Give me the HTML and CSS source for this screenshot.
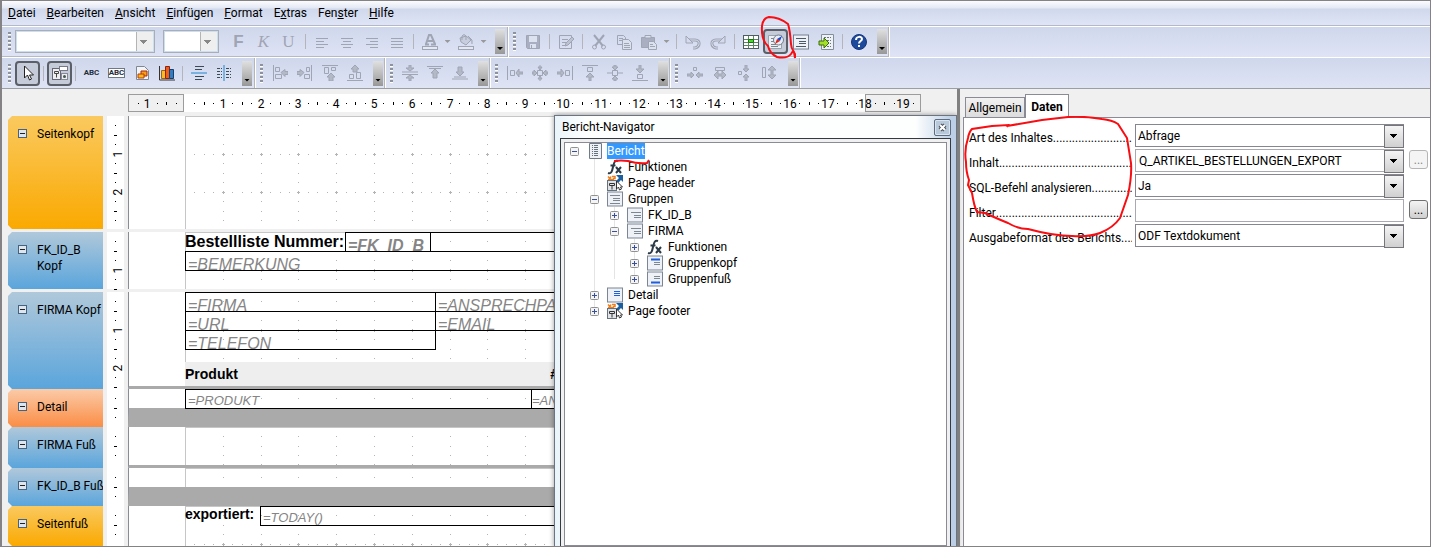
FILE: index.html
```html
<!DOCTYPE html>
<html lang="de">
<head>
    <meta charset="UTF-8">
    <meta name="viewport" content="width=device-width, initial-scale=1.0">
    <title>Bericht-Designer</title>
    <link rel="stylesheet" href="styles.css">
</head>
<body>
    <!-- Shared icons -->
    <svg class="symbols" aria-hidden="true">
        <symbol id="plus" viewBox="0 0 9 9"><rect x=".5" y=".5" width="8" height="8" rx="1" fill="#f4f4f4" stroke="#919191"/><path d="M2 4.500h5M4.500 2v5" stroke="#3a4f9c"/></symbol>
        <symbol id="minus" viewBox="0 0 9 9"><rect x=".5" y=".5" width="8" height="8" rx="1" fill="#f4f4f4" stroke="#919191"/><path d="M2 4.500h5" stroke="#3a4f9c"/></symbol>
        <symbol id="group" viewBox="0 0 16 16"><rect x=".5" y="1" width="15" height="14" fill="#eef1f6" stroke="#7a8596"/><path d="M4 5.500h10M7 8.500h7M7 10.500h7" stroke="#7c8791"/></symbol>
        <symbol id="page" viewBox="0 0 16 16"><path d="M1 1.500l2 2M4 1.500l-1 2M5 1.500h3v2H6M1 4.500h6" fill="none" stroke="#ef7d1c" stroke-width="1.500"/><path d="M9 0h7v7l-2-2-3 3-2-2 3-3z" fill="#1d5f9e"/><rect x=".5" y="5.500" width="9" height="10" fill="#dfe3e8" stroke="#66717e"/><path d="M2.500 8.500h5v2h-5zM5 10.500v4" fill="none" stroke="#333"/><path d="M9.500 6v8l2-2 1 3 2-1-1-2h2z" fill="#fff" stroke="#333"/></symbol>
        <symbol id="fx" viewBox="0 0 16 16"><path d="M1 14c3 1 4-1 5-6s2-7 5-6M3.500 6.500h5" fill="none" stroke="#2c3b47" stroke-width="2"/><path d="M9 8l5 6M14 8l-5 6" stroke="#2c3b47" stroke-width="2"/></symbol>
    </svg>

    <div class="app">
        <nav class="menubar">
            <button><u>D</u>atei</button>
            <button><u>B</u>earbeiten</button>
            <button><u>A</u>nsicht</button>
            <button><u>E</u>infügen</button>
            <button><u>F</u>ormat</button>
            <button>E<u>x</u>tras</button>
            <button>Fen<u>s</u>ter</button>
            <button><u>H</u>ilfe</button>
        </nav>

        <div class="toolbar-row format-row">
            <div class="toolbar">
                <span class="grip"></span>
                <select class="font-name" disabled aria-label="Schriftart"></select>
                <select class="font-size" disabled aria-label="Schriftgröße"></select>
                <button class="tool letter bold" disabled>F</button>
                <button class="tool letter italic" disabled>K</button>
                <button class="tool letter" disabled>U</button>
                <span class="sep"></span>
                <button class="tool" disabled aria-label="Linksbündig"><svg viewBox="0 0 16 16"><path d="M2 4.500h12M2 7.500h8M2 10.500h12M2 13.500h8"/></svg></button>
                <button class="tool" disabled aria-label="Zentriert"><svg viewBox="0 0 16 16"><path d="M2 4.500h12M4 7.500h8M2 10.500h12M4 13.500h8"/></svg></button>
                <button class="tool" disabled aria-label="Rechtsbündig"><svg viewBox="0 0 16 16"><path d="M2 4.500h12M6 7.500h8M2 10.500h12M6 13.500h8"/></svg></button>
                <button class="tool" disabled aria-label="Blocksatz"><svg viewBox="0 0 16 16"><path d="M2 4.500h12M2 7.500h12M2 10.500h12M2 13.500h12"/></svg></button>
                <span class="sep"></span>
                <button class="tool" disabled aria-label="Zeichenfarbe"><svg viewBox="0 0 16 16"><path d="M3 10.500h4M9 10.500h5M4 10l3-9h2l4 9M6 7h5" stroke-width="2"/><rect x=".5" y="12.500" width="15" height="3" fill="#e4e8f4"/></svg></button>
                <button class="arrow" disabled aria-label="Zeichenfarbe wählen"></button>
                <button class="tool" disabled aria-label="Hintergrundfarbe"><svg viewBox="0 0 16 16"><path d="M2 4l6-2 5 4-5 5-5-3zM4 6V2q2-3 4 0v4M10 2l4 4v4" fill="#c8cede"/><rect x=".5" y="12.500" width="15" height="3" fill="#e4e8f4"/></svg></button>
                <button class="arrow" disabled aria-label="Hintergrund wählen"></button>
                <button class="more" aria-label="Mehr"></button>
            </div>
            <div class="toolbar">
                <span class="grip"></span>
                <button class="tool" disabled aria-label="Speichern"><svg viewBox="0 0 16 16"><path d="M1.500 1.500h13v13h-12l-1-1z" fill="#a9afc0"/><path d="M4 2h8v6H4z" fill="#dde2f0" stroke="none"/><path d="M5 10h6v4H5z" fill="#dde2f0" stroke="none"/><path d="M6.500 11v3"/></svg></button>
                <span class="sep"></span>
                <button class="tool" disabled aria-label="Bearbeiten"><svg viewBox="0 0 16 16"><path d="M1.500 1.500h12v13h-12zM4 5.500h6M4 8.500h4M4 11.500h3" fill="none"/><path d="M7 12l1-3 6-6 2 2-6 6z" fill="#bcc2d2"/></svg></button>
                <span class="sep"></span>
                <button class="tool" disabled aria-label="Ausschneiden"><svg viewBox="0 0 16 16"><path d="M3 1l9 11M13 1L4 12" stroke-width="2"/><circle cx="3.500" cy="13" r="2"/><circle cx="12.500" cy="13" r="2"/></svg></button>
                <button class="tool" disabled aria-label="Kopieren"><svg viewBox="0 0 16 16"><path d="M1.500 1.500h6l2 2v7h-8zM3 4.500h4M3 6.500h4"/><path d="M6.500 5.500h6l3 3v7h-9zM8 9.500h5M8 11.500h6M8 13.500h6" fill="#dce1f0"/></svg></button>
                <button class="tool" disabled aria-label="Einfügen"><svg viewBox="0 0 16 16"><path d="M.500 3.500h13v10H.5z" fill="#a9afc0"/><path d="M4 4V1.500h6V4z" fill="#dce1f0"/><path d="M7.500 7.500h5l3 3v5h-8zM9 10.500h3M9 12.500h5" fill="#dce1f0"/></svg></button>
                <button class="arrow" disabled aria-label="Einfügen wählen"></button>
                <span class="sep"></span>
                <button class="tool" disabled aria-label="Rückgängig"><svg viewBox="0 0 16 16"><path d="M4 6h6c6 0 5 7 0 8H8" stroke-width="3"/><path d="M4 6h6c6 0 5 7 0 8H8" stroke="#d5dbec"/><path d="M1 2v7h7z" fill="#d5dbec"/></svg></button>
                <button class="tool" disabled aria-label="Wiederholen"><svg viewBox="0 0 16 16"><path d="M12 6H6c-6 0-5 7 0 8h2" stroke-width="3"/><path d="M12 6H6c-6 0-5 7 0 8h2" stroke="#d5dbec"/><path d="M15 2v7H8z" fill="#d5dbec"/></svg></button>
                <span class="sep"></span>
                <button class="tool" aria-label="Tabelle"><svg viewBox="0 0 16 16"><rect x=".5" y="1.500" width="15" height="13" fill="#fff" stroke="#4c5f5a"/><path d="M1 5.500h14M1 8.500h14M1 11.500h14M5.500 2v12M10.500 2v12" stroke="#5c8566"/><path d="M5.500 5.500h5v3h-5z" fill="#3fe01e" stroke="#206c17"/></svg></button>
                <button class="tool pressed" aria-label="Bericht-Navigator"><svg viewBox="0 0 16 16"><path d="M.500 1.500h13v13H.5z" fill="#edf0f5" stroke="#99a3ad"/><path d="M3 4.500h4M3 7.500h3M3 10.500h5M3 12.500h7" stroke="#7b858e"/><circle cx="10.500" cy="6" r="5" fill="#e4edf8" stroke="#737c88"/><path d="M14 2l-2 5-3-2z" fill="#1646c9" stroke="none"/><path d="M7 10l2-5 3 2z" fill="#e22614" stroke="none"/></svg></button>
                <button class="tool" aria-label="Sortieren und Gruppieren"><svg viewBox="0 0 16 16"><rect x=".5" y="1" width="15" height="14" fill="#eef1f6" stroke="#75808f"/><path d="M3 4.500h10M6 7.500h7M6 9.500h7M3 12.500h10" stroke="#4b5866"/></svg></button>
                <button class="tool" aria-label="Bericht ausführen"><svg viewBox="0 0 16 16"><path d="M3.500 .5h12v15h-12z" fill="#eef1f6" stroke="#848e99"/><path d="M6 3.500h7M9 6.500h4M9 9.500h4M6 12.500h7" stroke="#68737e" stroke-dasharray="2 1"/><path d="M1 7h5V4l5 5-5 5v-3H1z" fill="#a4e126" stroke="#3a6b0c"/></svg></button>
                <span class="sep"></span>
                <button class="tool" aria-label="Hilfe"><svg viewBox="0 0 16 16"><circle cx="8" cy="8" r="7.500" fill="#1f4a9c" stroke="#14357a"/><path d="M5 6c0-4 6-4 6-1 0 2-3 2-3 4.500M8 11v2" stroke="#fff" stroke-width="2"/></svg></button>
                <button class="more" aria-label="Mehr"></button>
            </div>
        </div>

        <div class="toolbar-row">
            <div class="toolbar">
                <span class="grip"></span>
                <button class="tool pressed" aria-label="Auswahl"><svg viewBox="0 0 16 16"><path d="M4.500 1v12l3-3 2 5 2-1-2-4h4z" fill="#fff" stroke="#222"/></svg></button>
                <span class="sep"></span>
                <button class="tool pressed" aria-label="Berichtssteuerelemente"><svg viewBox="0 0 16 16"><rect x=".5" y="3.500" width="8" height="11" fill="#eee" stroke="#667"/><path d="M2.500 6.500h4v2h-4zM4.500 8.500v4" stroke="#444"/><rect x="7.500" y="1.500" width="8" height="4" fill="#fff" stroke="#778"/><rect x="9.500" y="8.500" width="6" height="6" fill="#eee" stroke="#889"/><circle cx="12.500" cy="11.500" r="1.500" fill="#455" stroke="none"/></svg></button>
                <span class="sep"></span>
                <button class="tool abc">ABC</button>
                <button class="tool abc boxed"><span>ABC</span></button>
                <button class="tool" aria-label="Bild"><svg viewBox="0 0 16 16"><path d="M2.500 1.500h8l4 4v9h-12z" fill="#f3f4f7" stroke="#7e8894"/><path d="M7 6h6v5H7z" fill="#f7a017" stroke="#a8260c"/><path d="M4 9h6v4H4z" fill="#ffb91d" stroke="#b53a0c"/></svg></button>
                <button class="tool" aria-label="Diagramm"><svg viewBox="0 0 16 16"><path d="M.500 1v14H16" stroke="#333"/><path d="M2.500 5.500h4v8h-4z" fill="#f9bb23" stroke="#a06210"/><path d="M6.500 1.500h4v12h-4z" fill="#f25b18" stroke="#8e210b"/><path d="M10.500 4.500h4v9h-4z" fill="#347bc0" stroke="#153d6d"/></svg></button>
                <span class="sep"></span>
                <button class="tool" aria-label="Horizontale Linie"><svg viewBox="0 0 16 16"><path d="M4 1.500h9M4 4.500h7M4 11.500h9M4 14.500h7" stroke="#3a4a57"/><path d="M0 8h16" stroke="#1c86cf"/></svg></button>
                <button class="tool" aria-label="Vertikale Linie"><svg viewBox="0 0 16 16"><path d="M1 3.500h5M1 6.500h5M1 9.500h5M1 12.500h5M10 3.500h5M10 6.500h5M10 9.500h5M10 12.500h5" stroke="#3a4a57" stroke-dasharray="3 1"/><path d="M8 0v16" stroke="#1c86cf"/></svg></button>
                <button class="more" aria-label="Mehr"></button>
            </div>
            <div class="toolbar">
                <span class="grip"></span>
                <button class="tool" disabled aria-label="Links"><svg viewBox="0 0 16 16"><path d="M1.500 0v16M3.500 2.500h4v4h-4zM3.500 9.500h6v4h-6z"/><path d="M9 7.500l4-3v2h3v3h-3v2z" class="solid"/></svg></button>
                <button class="tool" disabled aria-label="Rechts"><svg viewBox="0 0 16 16"><path d="M14.500 0v16M9.500 2.500h3v4h-3zM7.500 9.500h5v4h-5z"/><path d="M7 7.500l-4-3v2H0v3h3v2z" class="solid"/></svg></button>
                <button class="tool" disabled aria-label="Oben"><svg viewBox="0 0 16 16"><path d="M0 .5h16M2.500 2.500h4v6h-4zM9.500 2.500h4v3h-4z"/><path d="M9 8l4 4h-2v4H7v-4H5z" class="solid"/></svg></button>
                <button class="tool" disabled aria-label="Unten"><svg viewBox="0 0 16 16"><path d="M0 15.500h16M2.500 9.500h4v4h-4zM9.500 7.500h4v6h-4z"/><path d="M8 0l4 4h-2v3H6V4H4z" class="solid"/></svg></button>
                <button class="more" aria-label="Mehr"></button>
            </div>
            <div class="toolbar">
                <span class="grip"></span>
                <button class="tool" disabled aria-label="Abschnitt verkleinern"><svg viewBox="0 0 16 16"><path d="M0 7h16M0 9.500h16"/><path d="M8 6L4 3h3V0h2v3h3zM8 10l4 3H9v3H7v-3H4z" class="solid"/></svg></button>
                <button class="tool" disabled aria-label="Von oben verkleinern"><svg viewBox="0 0 16 16"><path d="M0 1.500h16M2 3.500h12"/><path d="M8 4l4 4h-2v5H6V8H4z" class="solid"/></svg></button>
                <button class="tool" disabled aria-label="Von unten verkleinern"><svg viewBox="0 0 16 16"><path d="M0 14h16M2 12h12"/><path d="M8 11L4 7h2V2h4v5h2z" class="solid"/></svg></button>
                <button class="more" aria-label="Mehr"></button>
            </div>
            <div class="toolbar">
                <span class="grip"></span>
                <button class="tool" disabled aria-label="Linksbündig ausrichten"><svg viewBox="0 0 16 16"><path d="M.500 1v14M3.500 5.500h4v5h-4z"/><path d="M9 8l3-4v3h4v2h-4v3z" class="solid"/></svg></button>
                <button class="tool" disabled aria-label="Horizontal zentrieren"><svg viewBox="0 0 16 16"><path d="M5.500 5.500h5v5h-5zM8 0v5M8 11v5"/><path d="M5 8L2 5v2H0v2h2v2zM11 8l3-3v2h2v2h-2v2zM8 5L6 2h4zM8 11l-2 3h4z" class="solid"/></svg></button>
                <button class="tool" disabled aria-label="Rechtsbündig ausrichten"><svg viewBox="0 0 16 16"><path d="M15.500 1v14M8.500 5.500h4v5h-4z"/><path d="M7 8L4 4v3H0v2h4v3z" class="solid"/></svg></button>
                <button class="tool" disabled aria-label="Oben ausrichten"><svg viewBox="0 0 16 16"><path d="M0 .5h16M5.500 2.500h5v4h-5z"/><path d="M8 8l4 4h-3v4H7v-4H4z" class="solid"/></svg></button>
                <button class="tool" disabled aria-label="Vertikal zentrieren"><svg viewBox="0 0 16 16"><path d="M5.500 5.500h5v5h-5zM0 8h5M11 8h5"/><path d="M8 5L5 2h2V0h2v2h2zM8 11l3 3H9v2H7v-2H5z" class="solid"/></svg></button>
                <button class="tool" disabled aria-label="Unten ausrichten"><svg viewBox="0 0 16 16"><path d="M0 15.500h16M5.500 9.500h5v4h-5z"/><path d="M8 8L4 4h3V0h2v4h3z" class="solid"/></svg></button>
                <button class="more" aria-label="Mehr"></button>
            </div>
            <div class="toolbar">
                <span class="grip"></span>
                <button class="tool" disabled aria-label="Kleinste Breite"><svg viewBox="0 0 16 16"><path d="M6.500 2.500h3v3h-3z"/><path d="M7 10L4 7v2H0v2h4v2zM9 10l3-3v2h4v2h-4v2z" class="solid"/></svg></button>
                <button class="tool" disabled aria-label="Größte Breite"><svg viewBox="0 0 16 16"><path d="M3.500 2.500h9v3h-9z"/><path d="M2 10l4-4v3h4V6l4 4-4 4v-3H6v3z" class="solid"/></svg></button>
                <button class="tool" disabled aria-label="Kleinste Höhe"><svg viewBox="0 0 16 16"><path d="M1.500 6.500h3v3h-3z"/><path d="M9 7L6 4h2V0h2v4h2zM9 9l3 3h-2v4H8v-4H6z" class="solid"/></svg></button>
                <button class="tool" disabled aria-label="Größte Höhe"><svg viewBox="0 0 16 16"><path d="M.500 2.500h3v10h-3z"/><path d="M10 1l4 4h-3v5h3l-4 4-4-4h3V5H6z" class="solid"/></svg></button>
                <button class="more" aria-label="Mehr"></button>
            </div>
        </div>

        <main class="workspace">
            <div class="designer">
                <div class="ruler">
                    <div class="ruler-margin"></div>
                    <div class="ruler-page"></div>
                    <div class="ruler-margin"></div>
                    <svg class="ruler-marks" id="rulerMarks"></svg>
                </div>

                <section class="band gap page-head">
                    <h2 class="band-label yellow"><i class="fold"></i>Seitenkopf</h2>
                    <svg class="band-ruler"></svg>
                    <div class="band-area"><svg class="grid"></svg></div>
                </section>

                <section class="band gap group-head">
                    <h2 class="band-label blue"><i class="fold"></i>FK_ID_B<br>Kopf</h2>
                    <svg class="band-ruler"></svg>
                    <div class="band-area"><svg class="grid"></svg>
                        <div class="fields large">
                            <b class="caption title">Bestellliste Nummer:</b>
                            <span class="field number"><b>=FK_ID_B</b></span>
                            <span class="field rest"></span>
                        </div>
                        <div class="fields large"><span class="field rest">=BEMERKUNG</span></div>
                    </div>
                </section>

                <section class="band company-head">
                    <h2 class="band-label blue"><i class="fold"></i>FIRMA Kopf</h2>
                    <svg class="band-ruler"></svg>
                    <div class="band-area"><svg class="grid"></svg>
                        <div class="fields large"><span class="field half">=FIRMA</span><span class="field rest">=ANSPRECHPARTNER</span></div>
                        <div class="fields large"><span class="field half">=URL</span><span class="field rest">=EMAIL</span></div>
                        <div class="fields large"><span class="field half">=TELEFON</span></div>
                        <div class="columns"><b>Produkt</b><b>#</b></div>
                    </div>
                </section>

                <section class="band detail">
                    <h2 class="band-label orange"><i class="fold"></i>Detail</h2>
                    <svg class="band-ruler"></svg>
                    <div class="band-area"><svg class="grid"></svg>
                        <div class="fields"><span class="field product">=PRODUKT</span><span class="field rest amount">=ANZAHL</span></div>
                    </div>
                </section>

                <section class="band company-foot">
                    <h2 class="band-label blue"><i class="fold"></i>FIRMA Fuß</h2>
                    <svg class="band-ruler"></svg>
                    <div class="band-area"><svg class="grid"></svg></div>
                </section>

                <section class="band group-foot">
                    <h2 class="band-label blue"><i class="fold"></i>FK_ID_B Fuß</h2>
                    <svg class="band-ruler"></svg>
                    <div class="band-area"><svg class="grid"></svg></div>
                </section>

                <section class="band page-foot">
                    <h2 class="band-label yellow"><i class="fold"></i>Seitenfuß</h2>
                    <svg class="band-ruler"></svg>
                    <div class="band-area"><svg class="grid"></svg>
                        <div class="fields"><b class="caption exported">exportiert:</b><span class="field rest">=TODAY()</span></div>
                    </div>
                </section>
            </div>

            <aside class="navigator">
                <header>
                    <h2>Bericht-Navigator</h2>
                    <button class="close" aria-label="Schließen"><svg viewBox="0 0 9 9"><path d="M2 2l5 5M7 2L2 7" stroke="#4a5058" stroke-width="4"/><path d="M2 2l5 5M7 2L2 7" stroke="#fff" stroke-width="2"/></svg></button>
                </header>
                <div class="tree-frame">
                    <ul class="tree">
                        <li>
                            <div class="node root"><svg class="fold-icon"><use href="#minus"/></svg><svg class="icon" viewBox="0 0 16 16"><path d="M2.500 .5h12v15h-12z" fill="#eef1f6" stroke="#707b8a"/><path d="M5 2.500h7M5 4.500h7M5 6.500h7M5 8.500h7M5 10.500h7M5 12.500h7" stroke="#66717e" stroke-dasharray="1 1 4 1"/></svg><span class="selected">Bericht</span></div>
                            <ul>
                                <li><div class="node"><i class="fold-icon"></i><svg class="icon"><use href="#fx"/></svg>Funktionen</div></li>
                                <li><div class="node"><i class="fold-icon"></i><svg class="icon"><use href="#page"/></svg>Page header</div></li>
                                <li>
                                    <div class="node"><svg class="fold-icon"><use href="#minus"/></svg><svg class="icon" viewBox="0 0 16 16"><rect x=".5" y="1" width="15" height="14" fill="#eef1f6" stroke="#7a8596"/><path d="M3 4.500h10M6 7.500h7M6 9.500h7M3 12.500h10" stroke="#7c8791"/></svg>Gruppen</div>
                                    <ul>
                                        <li><div class="node"><svg class="fold-icon"><use href="#plus"/></svg><svg class="icon"><use href="#group"/></svg>FK_ID_B</div></li>
                                        <li>
                                            <div class="node"><svg class="fold-icon"><use href="#minus"/></svg><svg class="icon"><use href="#group"/></svg>FIRMA</div>
                                            <ul>
                                                <li><div class="node"><svg class="fold-icon"><use href="#plus"/></svg><svg class="icon"><use href="#fx"/></svg>Funktionen</div></li>
                                                <li><div class="node"><svg class="fold-icon"><use href="#plus"/></svg><svg class="icon" viewBox="0 0 16 16"><rect x=".5" y="1" width="15" height="14" fill="#eef1f6" stroke="#7a8596"/><path d="M4 4.500h9" stroke="#1e5fe0" stroke-width="2"/><path d="M7 7.500h6M7 9.500h6" stroke="#7c8791"/></svg>Gruppenkopf</div></li>
                                                <li><div class="node"><svg class="fold-icon"><use href="#plus"/></svg><svg class="icon" viewBox="0 0 16 16"><rect x=".5" y="1" width="15" height="14" fill="#eef1f6" stroke="#7a8596"/><path d="M7 5.500h6M7 7.500h6" stroke="#7c8791"/><path d="M4 11.500h9" stroke="#1e5fe0" stroke-width="2"/></svg>Gruppenfuß</div></li>
                                            </ul>
                                        </li>
                                    </ul>
                                </li>
                                <li><div class="node"><svg class="fold-icon"><use href="#plus"/></svg><svg class="icon" viewBox="0 0 16 16"><rect x=".5" y="1" width="15" height="14" fill="#eef1f6" stroke="#7a8596"/><path d="M7 4.500h6M7 6.500h6M7 8.500h6" stroke="#1e5fe0"/></svg>Detail</div></li>
                                <li><div class="node"><svg class="fold-icon"><use href="#plus"/></svg><svg class="icon"><use href="#page"/></svg>Page footer</div></li>
                            </ul>
                        </li>
                    </ul>
                </div>
                <svg class="mark mark-root" viewBox="0 0 40 10"><path d="M2 3q7-1 14 0 10 3 19 2l2-3"/></svg>
            </aside>

            <div class="properties">
                <div class="tabs" role="tablist">
                    <button role="tab">Allgemein</button>
                    <button role="tab" class="active" aria-selected="true">Daten</button>
                </div>
                <form class="sheet">
                    <div class="row">
                        <label for="contentType">Art des Inhaltes<span class="leader">..................................................</span></label>
                        <div class="combo"><select id="contentType"><option>Abfrage</option></select></div>
                    </div>
                    <div class="row">
                        <label for="content">Inhalt<span class="leader">............................................................</span></label>
                        <div class="combo light"><select id="content"><option>Q_ARTIKEL_BESTELLUNGEN_EXPORT</option></select></div>
                        <button type="button" class="dots" disabled>...</button>
                    </div>
                    <div class="row">
                        <label for="sql">SQL-Befehl analysieren<span class="leader">..............................</span></label>
                        <div class="combo"><select id="sql"><option>Ja</option></select></div>
                    </div>
                    <div class="row">
                        <label for="filter">Filter<span class="leader">............................................................</span></label>
                        <input id="filter" type="text">
                        <button type="button" class="dots">...</button>
                    </div>
                    <div class="row">
                        <label for="format">Ausgabeformat des Berichts<span class="leader">....................</span></label>
                        <div class="combo"><select id="format"><option>ODF Textdokument</option></select></div>
                    </div>
                </form>
                <svg class="mark mark-labels" viewBox="0 0 180 130"><path d="M43 11L44 9 28 10 8 13Q5 16 4 22 0 34 2 46 2 56 5 64L4 69 8 77Q10 90 13 96L21 97Q34 103 44 107 54 113 64 113 90 120 108 120 126 121 136 117 149 112 156 102L164 79Q168 60 167 47L163 22 154 8Q148 4 138 3 120 0 104 1L78 4 43 10"/></svg>
            </div>
        </main>

        <svg class="mark mark-button" viewBox="0 0 40 48"><path d="M31 30Q30 16 28 10 19 3 9 3 3 4 2 12q-1 14 6 20 2 8 9 11 10 2 14-3l2-3 2 3v4l-1-6q-3-4-3-8"/></svg>
    </div>

    <script src="script.js"></script>
</body>
</html>
```

FILE: styles.css
```css
:root {
    --ui-font: Roboto, "Open Sans", sans-serif;
    --doc-font: "Liberation Sans", Arial, sans-serif;
    --frame: #848284;
    --face: #f0f0f0;
    --line: #8b8b95;
    --empty: #aaaaaa;
}

* {
    margin: 0;
    padding: 0;
    box-sizing: border-box;
}

body {
    font-family: var(--ui-font);
    font-size: 12px;
    line-height: 16px;
    color: #000;
    background: var(--face);
}

button,
input,
select {
    font: inherit;
    color: inherit;
}

svg {
    display: block;
}

.symbols {
    position: absolute;
    width: 0;
    height: 0;
}

.app {
    position: relative;
    display: flex;
    flex-direction: column;
    min-height: 100vh;
    border: 1px solid var(--frame);
    border-left-width: 2px;
    overflow: hidden;
}

/* Menu */
.menubar {
    display: flex;
    gap: 11px;
    height: 25px;
    padding: 4px 6px;
    background: linear-gradient(#fbfcfe 0, #e3e8f4 7px, #d0d8ec 8px, #dfe5f6 100%);
    border-bottom: 1px solid #b5b9c6;
}

.menubar button {
    border: none;
    background: none;
}

/* Toolbars */
.toolbar-row {
    display: flex;
    height: 31px;
    background: linear-gradient(#cfd7ec, #dfe4f5);
    border-top: 1px solid #fff;
}

.toolbar-row + .toolbar-row {
    height: 32px;
    border-bottom: 1px solid #9c9ea6;
}

.toolbar {
    display: flex;
    align-items: center;
    padding-right: 1px;
    border-right: 1px solid #b5b5b5;
    box-shadow: 1px 0 #fff;
    margin-right: 1px;
}

.toolbar:first-child {
    padding: 0 2px;
}

.format-row .toolbar {
    border-bottom: 1px solid #b7bac4;
}

.grip {
    width: 3px;
    height: 19px;
    margin: 0 4px;
    background: repeating-linear-gradient(#8e929c 0 2px, #fff 2px 3px, transparent 3px 4px);
}

.tool {
    display: flex;
    align-items: center;
    justify-content: center;
    width: 25px;
    height: 25px;
    border: none;
    background: none;
}

.tool svg {
    flex: none;
    width: 16px;
    height: 16px;
    fill: none;
    stroke: #a0a5b4;
}

.tool .solid {
    fill: #b4b9c8;
}

.pressed {
    border: 2px solid #5a5f68;
    border-radius: 4px;
    background: #c6cbd9;
}

.letter {
    font: 17px "Liberation Serif", serif;
    color: #a0a5b4;
}

.bold {
    font-weight: bold;
    font-family: "Liberation Sans", sans-serif;
}

.italic {
    font-style: italic;
}

.abc {
    font-size: 8px;
    font-weight: bold;
    color: #1f2f3d;
}

.boxed span {
    line-height: 8px;
    background: #fff;
    border: 1px solid #6f7984;
}

.sep {
    width: 7px;
    height: 15px;
    background: linear-gradient(#b3b5ba, #b3b5ba) center / 1px 100% no-repeat;
}

.format-row .sep {
    width: 8px;
}

.font-name,
.font-size {
    appearance: none;
    width: 140px;
    height: 23px;
    border: 1px solid #a8aeb8;
    box-shadow: inset 0 0 0 1px #cfdeee;
    background:
        linear-gradient(#888, #888) right 7px top 9px / 7px 1px no-repeat,
        linear-gradient(#888, #888) right 8px top 10px / 5px 1px no-repeat,
        linear-gradient(#888, #888) right 9px top 11px / 3px 1px no-repeat,
        linear-gradient(#888, #888) right 10px top 12px / 1px 1px no-repeat,
        linear-gradient(#b4b4b4, #b4b4b4) right 17px top 0 / 1px 100% no-repeat,
        linear-gradient(#efefef, #efefef) right 0 top 0 / 17px 100% no-repeat,
        #fff;
    opacity: 1;
}

.font-size {
    width: 56px;
    margin: 0 7px 0 8px;
}

.arrow {
    width: 11px;
    height: 25px;
    border: none;
    background: none;
}

.arrow::before,
.more::after {
    content: "";
    display: block;
    margin: 0 auto;
    width: 6px;
    height: 3px;
    background: #999;
    clip-path: polygon(0 0, 100% 0, 50% 100%);
}

.more {
    display: flex;
    align-items: flex-end;
    width: 10px;
    height: 25px;
    margin-left: 6px;
    padding-bottom: 4px;
    border: none;
    background: linear-gradient(#e0e0e0, #989898);
}

.more::after {
    background: #000;
}

/* Workspace */
.workspace {
    position: relative;
    display: flex;
    flex: 1;
}

.designer {
    flex: 1;
    min-width: 0;
    padding: 5px 0 0 6px;
    overflow: hidden;
}

.ruler {
    position: relative;
    display: flex;
    width: max-content;
    height: 18px;
    margin: 0 0 4px 120px;
}

.ruler-margin {
    width: 56px;
    border: 1px solid #9c9c9c;
}

.ruler-page {
    width: 681px;
    background: #fff;
}

.ruler-marks {
    position: absolute;
    inset: 0;
    width: 100%;
    height: 100%;
    overflow: visible;
}

.ruler-marks text,
.band-ruler text {
    font: 12px var(--ui-font);
    text-anchor: middle;
}

.band {
    display: flex;
}

.gap {
    margin-bottom: 3px;
}

.page-head {
    height: 113px;
}

.group-head {
    height: 57px;
}

.company-head {
    height: 97px;
}

.company-foot {
    height: 41px;
}

.detail,
.group-foot {
    height: 38px;
}

.page-foot {
    height: 40px;
}

.band-label {
    display: flex;
    width: 95px;
    padding: 10px 0 0 10px;
    font-size: 12px;
    font-weight: normal;
    white-space: nowrap;
    clip-path: polygon(4px 0, 100% 0, 100% 100%, 4px 100%, 0 calc(100% - 4px), 0 4px);
}

.yellow {
    background: linear-gradient(#fac95f, #faa900);
}

.blue {
    background: linear-gradient(#b0c8da, #5aa5dc);
}

.orange {
    background: linear-gradient(#fbcba8, #fa8d45);
}

.fold {
    flex: none;
    width: 9px;
    height: 9px;
    margin: 3px 10px 0 0;
    border: 1px solid #47627c;
    background: linear-gradient(#222, #222) center / 5px 1px no-repeat, #dde6ee;
}

.band-ruler {
    width: 17px;
    height: 100%;
    margin: 0 4px;
    background: #fff;
    overflow: visible;
}

.band-area {
    position: relative;
    flex: 1;
    min-width: 0;
    padding-left: 56px;
    background: #fff;
    border-left: 1px solid #8b8b95;
}

.company-head .band-area,
.company-foot .band-area {
    border-bottom: 3px solid var(--empty);
}

.detail .band-area,
.group-foot .band-area {
    border-bottom: 19px solid var(--empty);
}

.grid {
    position: absolute;
    top: 0;
    left: 56px;
    width: calc(100% - 56px);
    height: 100%;
    border: solid #c6c6c6;
    border-width: 1px 0 0 1px;
}

.fields {
    position: relative;
    display: flex;
    height: 19px;
    font: italic 13px/15px var(--doc-font);
}

.large {
    font-size: 16px;
    line-height: 20px;
}

.caption {
    font-style: normal;
}

.title {
    width: 160px;
}

.exported {
    width: 75px;
    font-size: 14px;
    line-height: 17px;
}

.field {
    height: 20px;
    padding: 3px 2px 0;
    border: 1px solid #000;
    color: #858585;
    white-space: nowrap;
    overflow: hidden;
}

.number {
    width: 86px;
    margin-right: -1px;
}

.half {
    width: 251px;
    margin-right: -1px;
}

.product {
    width: 347px;
    margin-right: -1px;
}

.amount {
    padding-left: 0;
}

.rest {
    flex: 1;
}

.columns {
    position: relative;
    display: flex;
    width: 373px;
    height: 24px;
    margin-top: 13px;
    justify-content: space-between;
    font: 14px/24px var(--doc-font);
    background: #eee;
    box-shadow: 200px 0 #eee;
}

/* Navigator window */
.navigator {
    position: absolute;
    top: 26px;
    bottom: -2px;
    left: 552px;
    display: flex;
    flex-direction: column;
    width: 403px;
    padding: 0 5px;
    border: 1px solid #6b7480;
    background: linear-gradient(90deg, #e9f4fa 0, #fdfefe 30px, #fdfefe 90%, #bccfe6 99%);
    box-shadow: 0 0 5px rgba(0, 0, 0, 0.4);
}

.navigator header {
    display: flex;
    justify-content: space-between;
    height: 22px;
    padding: 3px 0 0 2px;
}

.navigator h2 {
    font-size: 12px;
    font-weight: normal;
}

.close {
    display: flex;
    align-items: center;
    justify-content: center;
    width: 17px;
    height: 17px;
    border: 1px solid #5d6c80;
    border-radius: 2px;
    background: #b9c9dc;
    box-shadow: inset 0 0 0 1px #dbe5ef;
}

.close svg {
    width: 9px;
    height: 9px;
}

.tree-frame {
    display: flex;
    flex: 1;
    padding: 3px 3px 0;
    border: 1px solid #333a42;
    background: var(--face);
}

.tree {
    flex: 1;
    padding-left: 4px;
    border: 1px solid var(--line);
    background: #fff;
}

.tree ul {
    position: relative;
    padding-left: 20px;
}

.tree ul::before {
    content: "";
    position: absolute;
    top: 0;
    bottom: 8px;
    left: 25px;
    border-left: 1px solid #e4e4e4;
}

.tree li {
    position: relative;
    list-style: none;
}

.node {
    display: flex;
    align-items: center;
    height: 16px;
    white-space: nowrap;
}

.fold-icon {
    flex: none;
    width: 9px;
    height: 9px;
    margin: 0 8px 0 1px;
}

.icon {
    flex: none;
    width: 16px;
    height: 16px;
    margin-right: 5px;
}

.root .icon {
    margin-right: 4px;
}

.selected {
    color: #fff;
    background: #3399ff;
}

/* Properties */
.properties {
    position: relative;
    display: flex;
    flex-direction: column;
    width: 473px;
    padding-top: 5px;
    border-left: 3px solid #808080;
}

.tabs {
    display: flex;
    align-items: flex-end;
    height: 23px;
    padding-left: 5px;
}

.tabs button {
    height: 20px;
    border: 1px solid var(--line);
    border-bottom: none;
    background: linear-gradient(#f2f2f2, #dcdcdc);
    width: 60px;
    white-space: nowrap;
}

.tabs .active {
    position: relative;
    width: 44px;
    height: 24px;
    margin-bottom: -1px;
    font-weight: bold;
    background: #fff;
}

.sheet {
    flex: 1;
    display: flex;
    flex-direction: column;
    gap: 2px;
    margin-left: 3px;
    padding: 6px 2px 0 5px;
    border: solid var(--line);
    border-width: 1px 0 0 1px;
    background: #fff;
}

.row {
    display: flex;
    height: 23px;
}

.row label {
    display: flex;
    width: 163px;
    margin-right: 3px;
    padding-top: 6px;
    white-space: nowrap;
    overflow: hidden;
}

.leader {
    flex: 1;
    overflow: hidden;
}

.combo {
    position: relative;
    width: 269px;
}

.combo select,
.row input {
    appearance: none;
    width: 269px;
    height: 23px;
    padding: 0 20px 0 2px;
    border: 1px solid #85868f;
    background: #fff;
}

.light select,
.row input {
    border-color: #a9a9b0;
}

.light select {
    padding-left: 3px;
}

.combo::after {
    content: "";
    position: absolute;
    top: 1px;
    right: 0;
    width: 18px;
    height: 21px;
    border: 1px solid #75757a;
    background:
        linear-gradient(#000, #000) 5px 8px / 7px 1px no-repeat,
        linear-gradient(#000, #000) 6px 9px / 5px 1px no-repeat,
        linear-gradient(#000, #000) 7px 10px / 3px 1px no-repeat,
        linear-gradient(#000, #000) 8px 11px / 1px 1px no-repeat,
        linear-gradient(#f4f4f4, #d0d0d0);
    pointer-events: none;
}

.dots {
    width: 19px;
    height: 19px;
    margin: 1px 0 0 5px;
    border: 1px solid #707070;
    border-radius: 3px;
    background: linear-gradient(#f4f4f4, #cfcfcf);
}

.dots:disabled {
    border-color: #b5b5b5;
    color: #888;
    background: #f4f4f4;
}

/* Red pen marks */
.mark {
    position: absolute;
    fill: none;
    stroke: #f80d12;
    stroke-width: 2;
    pointer-events: none;
}

.mark-root {
    top: 42px;
    left: 57px;
    width: 40px;
    height: 10px;
}

.mark-labels {
    top: 27px;
    left: 4px;
    width: 180px;
    height: 130px;
}

.mark-button {
    top: 13px;
    left: 758px;
    width: 40px;
    height: 48px;
}
```

FILE: script.js
```js
const NS = 'http://www.w3.org/2000/svg';
const CM = 37.8;

function add(svg, name, attrs, text) {
    const el = document.createElementNS(NS, name);
    for (const key in attrs) {
        el.setAttribute(key, attrs[key]);
    }
    if (text) {
        el.textContent = text;
    }
    svg.appendChild(el);
}

function dot(svg, x, y, w, h, fill) {
    add(svg, 'rect', { x: x, y: y, width: w, height: h, fill: fill });
}

// Horizontal ruler, zero sits at the left page margin
const ruler = document.getElementById('rulerMarks');
for (let q = -5; q <= 77; q++) {
    const x = Math.round(57 + q * CM / 4);
    if (q % 4 === 0) {
        if (q !== 0) {
            add(ruler, 'text', { x: x, y: 14 }, String(Math.abs(q / 4)));
        }
    } else if (q % 2 === 0) {
        dot(ruler, x, 8, 1, 3, '#000');
    } else {
        dot(ruler, x, 9, 1, 1, '#000');
    }
}

// Vertical ruler of every band, no number where it would run into the next band
document.querySelectorAll('.band-ruler').forEach(svg => {
    const height = svg.getBoundingClientRect().height;
    for (let q = 1; q * CM / 4 < height; q++) {
        const y = Math.round(q * CM / 4);
        if (q % 4 === 0) {
            if (y + 5 < height) {
                add(svg, 'text', { transform: `translate(15 ${y}) rotate(-90)` }, String(q / 4));
            }
        } else if (q % 2 === 0) {
            dot(svg, 7, y, 3, 1, '#000');
        } else {
            dot(svg, 8, y, 1, 1, '#000');
        }
    }
});

// Dotted centimetre grid
document.querySelectorAll('.grid').forEach(svg => {
    const box = svg.getBoundingClientRect();
    for (let r = 1; r * CM / 4 < box.height; r++) {
        for (let c = 1; c * CM / 4 < box.width; c++) {
            if (r % 4 && c % 4) {
                continue;
            }
            const x = Math.round(c * CM / 4) - 1;
            const y = Math.round(r * CM / 4) - 1;
            dot(svg, x, y, 1, 1, '#b4b4b4');
            if (r % 4 === 0 && c % 4 === 0) {
                dot(svg, x - 1, y, 3, 1, '#b4b4b4');
                dot(svg, x, y - 1, 1, 3, '#b4b4b4');
            }
        }
    }
});
```
